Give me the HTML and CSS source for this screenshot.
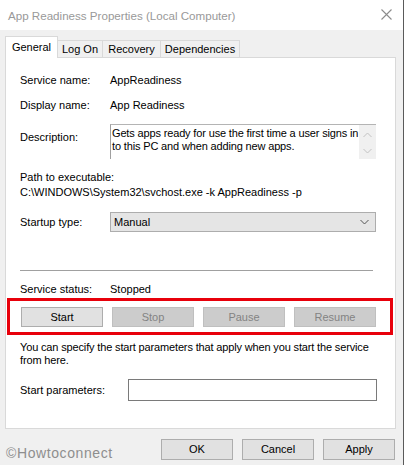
FILE: index.html
```html
<!DOCTYPE html>
<html>
<head>
<meta charset="utf-8">
<link rel="stylesheet" href="styles.css">
</head>
<body>
<div class="window">
  <div class="titlebar">
    <span class="title">App Readiness Properties (Local Computer)</span>
    <svg class="close" width="11" height="11" viewBox="0 0 11 11"><path d="M0.5 0.5 L10.5 10.5 M10.5 0.5 L0.5 10.5" stroke="#8c8c8c" stroke-width="1.1" fill="none"/></svg>
  </div>
  <div class="dlg">
    <div class="tabs">
      <div class="tab active t1">General</div>
      <div class="tab t2">Log On</div>
      <div class="tab t3">Recovery</div>
      <div class="tab t4">Dependencies</div>
    </div>
    <div class="panel">
      <div class="row r1 pad"><span class="lbl">Service name:</span><span>AppReadiness</span></div>
      <div class="row r2 pad"><span class="lbl">Display name:</span><span>App Readiness</span></div>
      <div class="descrow pad">
        <span class="lbl desclbl">Description:</span>
        <div class="textbox">
          <div class="tbtext">Gets apps ready for use the first time a user signs in to this PC and when adding new apps.</div>
          <div class="scroll">
            <svg width="9" height="6" viewBox="0 0 9 6"><path d="M0.5 5 L4.5 1 L8.5 5" stroke="#c2c2c2" stroke-width="1" fill="none"/></svg>
            <svg width="9" height="6" viewBox="0 0 9 6"><path d="M0.5 1 L4.5 5 L8.5 1" stroke="#c2c2c2" stroke-width="1" fill="none"/></svg>
          </div>
        </div>
      </div>
      <div class="pathlbl pad">Path to executable:</div>
      <div class="pathval pad">C:\WINDOWS\System32\svchost.exe -k AppReadiness -p</div>
      <div class="startrow pad">
        <span class="lbl">Startup type:</span>
        <div class="select"><span>Manual</span>
          <svg width="9" height="6" viewBox="0 0 9 6"><path d="M0.5 1 L4.5 5 L8.5 1" stroke="#555" stroke-width="1" fill="none"/></svg>
        </div>
      </div>
      <div class="sep pad"></div>
      <div class="row status pad"><span class="lbl">Service status:</span><span>Stopped</span></div>
      <div class="redbox">
        <div class="svcbtns">
          <div class="btn">Start</div>
          <div class="btn disabled">Stop</div>
          <div class="btn disabled">Pause</div>
          <div class="btn disabled">Resume</div>
        </div>
      </div>
      <div class="info pad">You can specify the start parameters that apply when you start the service from here.</div>
      <div class="paramrow pad">
        <span class="plbl">Start parameters:</span>
        <div class="input"></div>
      </div>
    </div>
    <div class="footer">
      <span class="watermark">©Howtoconnect</span>
      <div class="dlgbtns">
        <div class="btn dbtn">OK</div>
        <div class="btn dbtn">Cancel</div>
        <div class="btn dbtn">Apply</div>
      </div>
    </div>
  </div>
</div>
</body>
</html>
```
FILE: styles.css
```css
html, body {
  margin: 0;
  padding: 0;
}
body {
  width: 404px;
  height: 465px;
  overflow: hidden;
  background: #5a5a5a;
  font-family: "Liberation Sans", Arial, sans-serif;
  font-size: 11px;
  color: #000;
}
.window {
  width: 403px;
  height: 465px;
  background: #f0f0f0;
}
.titlebar {
  height: 30px;
  background: #fff;
  display: flex;
  align-items: center;
  justify-content: space-between;
  padding: 0 11px 0 8px;
  box-sizing: border-box;
}
.title {
  font-size: 11.6px;
  color: #999;
  font-family: "Liberation Sans", Arial, sans-serif;
}
.close {
  display: block;
  margin-top: -1px;
}
.dlg {
  padding-top: 6px;
}
.tabs {
  display: flex;
  align-items: flex-end;
  height: 21px;
  padding-left: 5px;
}
.tab {
  box-sizing: border-box;
  height: 17px;
  line-height: 16px;
  background: #f0f0f0;
  border: 1px solid #d9d9d9;
  border-left: none;
  border-bottom: none;
  text-align: center;
  font-size: 11px;
}
.tab.active {
  height: 22px;
  margin-bottom: -1px;
  line-height: 20px;
  background: #fff;
  border-left: 1px solid #d9d9d9;
  position: relative;
  z-index: 1;
}
.t1 { width: 53px; }
.t2 { width: 45px; }
.t3 { width: 58px; }
.t4 { width: 79px; }
.panel {
  margin-left: 5px;
  width: 391px;
  height: 372px;
  box-sizing: border-box;
  background: #fff;
  border: 1px solid #d9d9d9;
}
.pad {
  margin-left: 14px;
}
.row {
  display: flex;
  height: 16px;
  line-height: 16px;
}
.lbl {
  width: 90px;
  flex: none;
}
.r1 { margin-top: 14px; }
.r2 { margin-top: 9px; }
.descrow {
  display: flex;
  margin-top: 11px;
}
.desclbl {
  padding-top: 5px;
  line-height: 16px;
}
.textbox {
  width: 266px;
  height: 35px;
  box-sizing: border-box;
  border-top: 1px solid #b4b4b4;
  border-left: 1px solid #a0a0a0;
  display: flex;
}
.tbtext {
  flex: 1;
  padding: 2px 0 0 1px;
  line-height: 13px;
  letter-spacing: -0.15px;
}
.scroll {
  width: 17px;
  background: #f0f0f0;
  display: flex;
  flex-direction: column;
  align-items: center;
  justify-content: space-between;
  padding: 7px 0 5px;
  box-sizing: border-box;
}
.scroll svg { display: block; }
.pathlbl {
  margin-top: 11px;
  line-height: 15px;
  height: 15px;
}
.pathval {
  line-height: 15px;
  height: 15px;
}
.startrow {
  display: flex;
  align-items: center;
  margin-top: 12px;
}
.select {
  width: 266px;
  height: 20px;
  box-sizing: border-box;
  background: #e5e5e5;
  border: 1px solid #adadad;
  display: flex;
  align-items: center;
  justify-content: space-between;
  padding: 0 6px 0 3px;
}
.select svg { display: block; }
.sep {
  margin-top: 38px;
  width: 353px;
  height: 1px;
  background: #a0a0a0;
}
.status { margin-top: 10px; }
.redbox {
  margin-top: 1px;
  margin-left: 1px;
  width: 386px;
  box-sizing: border-box;
  border: 3px solid #e8000b;
  padding: 6px 0 5px 11px;
}
.svcbtns {
  display: grid;
  grid-template-columns: repeat(4, 82px);
  column-gap: 9px;
}
.btn {
  box-sizing: border-box;
  height: 20px;
  line-height: 18px;
  text-align: center;
  background: #e1e1e1;
  border: 1px solid #adadad;
}
.btn.disabled {
  background: #cccccc;
  border-color: #bfbfbf;
  color: #838383;
}
.info {
  margin-top: 6px;
  width: 356px;
  line-height: 13px;
  letter-spacing: -0.15px;
}
.paramrow {
  display: flex;
  align-items: center;
  margin-top: 12px;
}
.plbl {
  width: 108px;
  flex: none;
}
.input {
  width: 249px;
  height: 22px;
  box-sizing: border-box;
  border: 1px solid #7a7a7a;
  background: #fff;
}
.footer {
  display: flex;
  align-items: center;
  justify-content: space-between;
  margin-top: 8px;
  padding: 0 8px 0 6px;
}
.watermark {
  font-size: 14px;
  color: #8e8e8e;
  letter-spacing: 0.6px;
  padding-top: 8px;
}
.dlgbtns {
  display: flex;
  gap: 9px;
}
.dbtn {
  width: 72px;
  height: 21px;
  line-height: 19px;
}
```
